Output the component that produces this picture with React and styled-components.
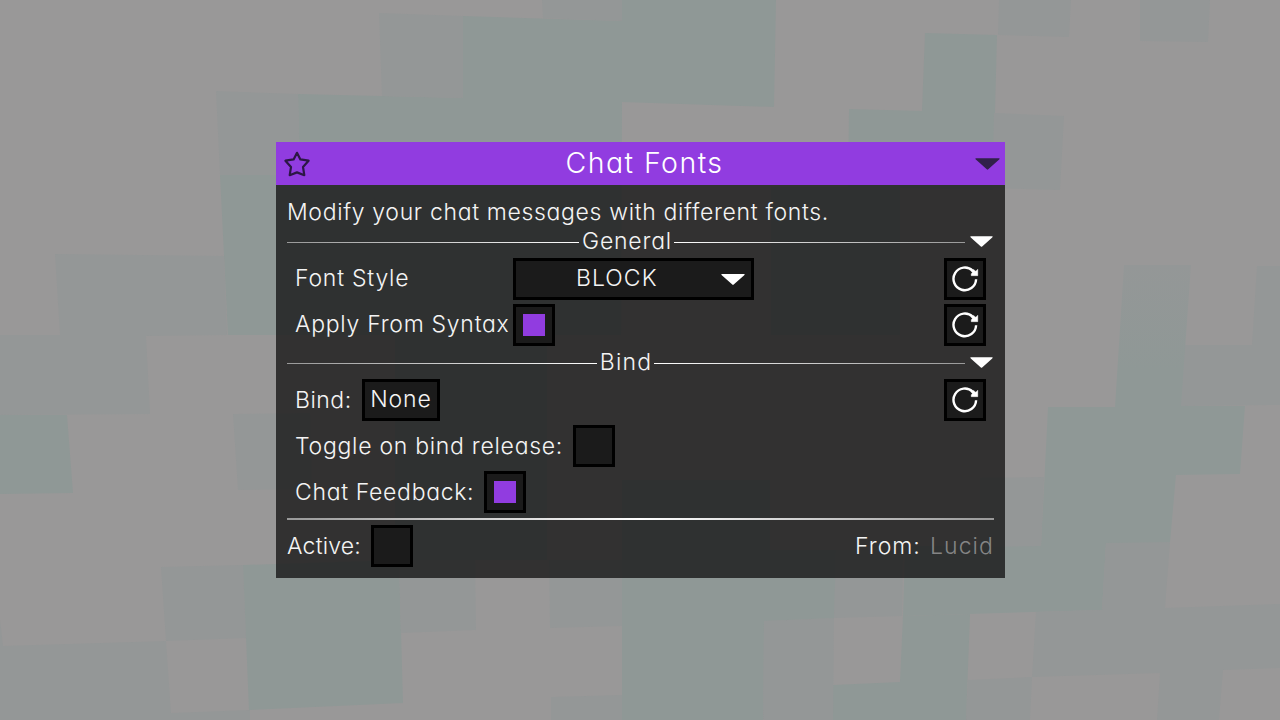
import React from "react";
import styled, { createGlobalStyle } from "styled-components";

const Global = createGlobalStyle`
  * { box-sizing: border-box; }
  body {
    margin: 0;
    overflow: hidden;
    font-family: Inter, "Liberation Sans", sans-serif;
    font-feature-settings: "cv11";
    font-weight: 290;
    font-size: 23px;
    color: #fff;
  }
`;

const Screen = styled.main`
  position: relative;
  width: 1280px;
  height: 720px;
  display: flex;
  justify-content: center;
  align-items: flex-start;
  padding: 142px 0 0 1px;
  background: #999898;
  overflow: hidden;
`;

const Backdrop = styled.svg`
  position: absolute;
  inset: 0;
`;

const Window = styled.section`
  position: relative;
  width: 729px;
  height: 436px;
`;

const TitleBar = styled.header`
  display: grid;
  grid-template-columns: 42px 1fr 36px;
  align-items: center;
  height: 43px;
  background: #913ce0;
`;

const Title = styled.h1`
  margin: 0;
  padding: 0 0 3px 2px;
  text-align: center;
  font-size: 28.5px;
  font-weight: 290;
  letter-spacing: 1.45px;
  line-height: 39px;
`;

const StarIcon = styled.svg`
  width: 28px;
  height: 28px;
  margin-left: 6.5px;
`;

const Body = styled.div`
  display: flex;
  flex-direction: column;
  height: 393px;
  padding: 11px;
  background: rgba(20, 20, 20, 0.78);
`;

const Text = styled.span`
  white-space: nowrap;
  letter-spacing: ${(p) => p.$track}px;
  line-height: 28px;
  color: ${(p) => (p.$muted ? "#858585" : "#f4f4f4")};
`;

const Description = styled(Text).attrs({ as: "p" })`
  margin: 0;
  height: 33px;
  line-height: 32px;
`;

const Divider = styled.div`
  display: flex;
  align-items: center;
  height: 25px;
  margin-bottom: 4px;
`;

const DividerLabel = styled(Text)`
  padding-bottom: 1px;
  width: ${(p) => p.$width}px;
  text-align: center;
  text-indent: 1px;
`;

const Rule = styled.i`
  flex: none;
  width: ${(p) => p.$width}px;
  height: 1px;
  margin-top: 2px;
  background: linear-gradient(to ${(p) => p.$to}, #999, #fff);
`;

const Caret = styled.svg`
  flex: none;
  width: ${(p) => p.$width}px;
  height: ${(p) => p.$height}px;
  fill: ${(p) => p.$fill || "#fff"};
`;

const DividerCaret = styled(Caret)`
  margin-left: 5px;
`;

const TitleCaret = styled(Caret)`
  margin: 0 0 0 6px;
`;

const Row = styled.div`
  display: flex;
  align-items: center;
  height: 42px;
  margin-bottom: 4px;
  padding: 0 8px;
`;

const Label = styled(Text)`
  width: ${(p) => p.$width}px;
  padding-bottom: ${(p) => p.$lift}px;
`;

const Frame = styled.button`
  display: flex;
  align-items: center;
  justify-content: center;
  flex: none;
  width: ${(p) => p.$width || 42}px;
  height: 42px;
  margin: 0;
  padding: 0;
  border: 3px solid #000;
  background: #1b1b1b;
  color: inherit;
  font: inherit;
  font-feature-settings: inherit;
  text-align: left;
`;

const ResetFrame = styled(Frame)`
  margin-left: auto;
`;

const SelectFrame = styled(Frame)`
  justify-content: flex-start;
  padding-left: 60px;
`;

const FrameText = styled(Text)`
  padding-bottom: 2px;
  width: ${(p) => p.$width}px;
`;

const CheckMark = styled.i`
  width: 22px;
  height: 22px;
  background: #913ce0;
`;

const Line = styled.hr`
  flex: none;
  width: 707px;
  height: 2px;
  margin: 1px 0 5px;
  border: 0;
  background: linear-gradient(to right, #999, #fff 50%, #999);
`;

const Footer = styled.footer`
  display: flex;
  align-items: center;
  height: 42px;
`;

const Credit = styled.div`
  display: flex;
  margin-left: auto;
`;

const TEAL = "#8f9896";
const SLATE = "#949797";

const clouds = [
  [TEAL, "463,16 622,21 622,0 776,0 774,107 622,102 621,335 228,335 220,175 300,175 298,94 463,98"],
  [SLATE, "379,13 463,16 463,98 382,96"],
  [SLATE, "216,91 298,94 300,175 220,175"],
  [SLATE, "542,0 622,0 622,21 543,18"],
  [SLATE, "55,254 224,256 227,335 146,336 150,414 0,415 0,335 60,335"],
  [TEAL, "0,415 67,415 73,493 0,494"],
  [SLATE, "233,414 310,413 312,489 238,490"],
  [SLATE, "999,0 1071,0 1069,37 998,35"],
  [SLATE, "1140,0 1210,0 1208,42 1140,41"],
  [TEAL, "925,33 997,35 993,190 900,188 900,335 771,335 771,187 848,187 849,109 922,111"],
  [SLATE, "994,113 1064,116 1060,190 992,188"],
  [SLATE, "1257,266 1280,266 1280,405 1180,406 1184,345 1252,345"],
  ["url(#fall)", "1124,265 1191,265 1181,406 1245,406 1240,474 1176,475 1170,543 1106,543 1102,610 903,616 905,546 1041,546 1048,407 1115,407"],
  [SLATE, "980,478 1044,477 1041,546 980,547"],
  [SLATE, "1106,543 1170,542 1165,608 1280,604 1280,668 1223,670 1219,720 1157,720 1160,673 1032,677 1036,612 1102,610"],
  [SLATE, "968,680 1032,677 1030,720 966,720"],
  [TEAL, "903,616 970,614 966,720 833,720 833,685 900,682"],
  [SLATE, "836,550 903,550 902,616 834,618 833,720 763,720 764,621 834,618"],
  [TEAL, "622,480 770,480 770,550 836,550 834,618 764,621 763,720 622,720"],
  [TEAL, "395,335 547,335 547,560 395,560"],
  [SLATE, "161,567 243,565 246,638 166,641"],
  [TEAL, "243,565 399,560 403,703 249,710"],
  [SLATE, "399,560 475,560 476,630 401,633"],
  [SLATE, "549,560 622,560 622,626 550,628"],
  [SLATE, "0,620 3,646 166,641 171,713 250,710 250,720 0,720"],
  [SLATE, "551,697 622,695 622,720 551,720"],
];

function Sky() {
  return (
    <Backdrop viewBox="0 0 1280 720" width="1280" height="720" aria-hidden="true">
      <defs>
        <linearGradient id="fall" gradientUnits="userSpaceOnUse" x1="0" y1="265" x2="0" y2="370">
          <stop offset="0" stopColor={SLATE} />
          <stop offset="1" stopColor={TEAL} />
        </linearGradient>
      </defs>
      {clouds.map(([fill, points]) => (
        <polygon key={points} fill={fill} points={points} />
      ))}
    </Backdrop>
  );
}

const caretPath = <path d="M.6 0H23.4Q24 .6 23.2 1.2L12.7 10.6Q12 11.2 11.3 10.6L.8 1.2Q0 .6 .6 0Z" />;

function Reset() {
  return (
    <ResetFrame aria-label="Reset">
      <svg width="28" height="28" viewBox="0 0 28 28" fill="none" stroke="#fff">
        <path d="M25.1 14.3A11.3 11.3 0 1 1 21.8 5.9" strokeWidth="2.4" />
        <path d="M26.8 4.2V10.7H20.2V8.8L21.4 7.7L20.4 6.4L22.4 4.4L24.8 6.2Z" fill="#fff" stroke="#fff" strokeWidth=".4" />
      </svg>
    </ResetFrame>
  );
}

function Checkbox({ checked }) {
  return (
    <Frame role="checkbox" aria-checked={!!checked}>
      {checked && <CheckMark />}
    </Frame>
  );
}

function Section({ label, track, left, width, right }) {
  return (
    <Divider>
      <Rule $width={left} $to="right" />
      <DividerLabel $track={track} $width={width}>{label}</DividerLabel>
      <Rule $width={right} $to="left" />
      <DividerCaret $width={23} $height={11} viewBox="0 0 24 11">{caretPath}</DividerCaret>
    </Divider>
  );
}

export default function App() {
  return (
    <Screen>
      <Global />
      <Sky />
      <Window>
        <TitleBar>
          <StarIcon viewBox="0 0 28 28" fill="none" stroke="#2c1745" strokeWidth="2.2" strokeLinejoin="round">
            <path d="M14 2.8L17.4 9.4L25.6 10.7L20 17L21.3 25.2L14 22.4L6.7 25.2L8 17L2.4 10.7L10.6 9.4Z" />
          </StarIcon>
          <Title>Chat Fonts</Title>
          <TitleCaret $width={25} $height={12} $fill="#31204a" viewBox="0 0 24 11">{caretPath}</TitleCaret>
        </TitleBar>
        <Body>
          <Description $track={0.66}>Modify your chat messages with different fonts.</Description>
          <Section label="General" track={0.8} left={292} width={95} right={291} />
          <Row>
            <Label $width={218} $lift={2} $track={0.78}>Font Style</Label>
            <SelectFrame $width={241}>
              <FrameText $track={1.05} $width={145}>BLOCK</FrameText>
              <Caret $width={24} $height={11} viewBox="0 0 24 11">{caretPath}</Caret>
            </SelectFrame>
            <Reset />
          </Row>
          <Row>
            <Label $width={218} $lift={2} $track={0.72}>Apply From Syntax</Label>
            <Checkbox checked />
            <Reset />
          </Row>
          <Section label="Bind" track={1.15} left={310} width={57} right={311} />
          <Row>
            <Label $width={67} $lift={1} $track={0.5}>Bind:</Label>
            <Frame $width={78}>
              <FrameText $track={0.9}>None</FrameText>
            </Frame>
            <Reset />
          </Row>
          <Row>
            <Label $width={278} $lift={1} $track={0.72}>Toggle on bind release:</Label>
            <Checkbox />
          </Row>
          <Row>
            <Label $width={189} $lift={1} $track={0.67}>Chat Feedback:</Label>
            <Checkbox checked />
          </Row>
          <Line />
          <Footer>
            <Label $width={84} $lift={1} $track={0.2}>Active:</Label>
            <Checkbox />
            <Credit>
              <Label $width={75} $lift={1} $track={1}>From:</Label>
              <Label $width={64} $lift={1} $track={1.05} $muted>Lucid</Label>
            </Credit>
          </Footer>
        </Body>
      </Window>
    </Screen>
  );
}
